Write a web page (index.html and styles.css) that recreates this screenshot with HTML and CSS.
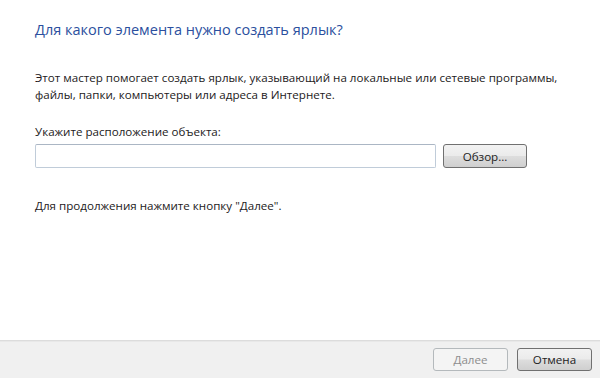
FILE: index.html
```html
<!DOCTYPE html>
<html lang="ru">
<head>
    <meta charset="UTF-8">
    <meta name="viewport" content="width=device-width, initial-scale=1.0">
    <title>Создать ярлык</title>
    <link rel="stylesheet" href="styles.css">
</head>
<body>
    <div class="wizard">
        <div class="wizard-body">
            <h1 class="main-instruction">Для какого элемента нужно создать ярлык?</h1>
            <p class="intro">Этот мастер помогает создать ярлык, указывающий на локальные или сетевые программы, файлы, папки, компьютеры или адреса в Интернете.</p>
            <label class="field-label" for="location">Укажите расположение объекта:</label>
            <div class="field-row">
                <input class="text-box" id="location" type="text">
                <button class="button">Обзор...</button>
            </div>
            <p class="hint">Для продолжения нажмите кнопку "Далее".</p>
        </div>
        <div class="wizard-footer">
            <button class="button" disabled>Далее</button>
            <button class="button">Отмена</button>
        </div>
    </div>
</body>
</html>
```

FILE: styles.css
```css
* {
    box-sizing: border-box;
}

body {
    margin: 0;
    background: #fff;
    font-family: 'Open Sans', 'Noto Sans', sans-serif;
    font-size: 11.6px;
    color: #231a22;
}

.wizard {
    height: 378px;
    display: flex;
    flex-direction: column;
}

.wizard-body {
    flex: 1;
    padding: 20px 0 0 35px;
}

.main-instruction {
    margin: 0;
    font-size: 14.5px;
    font-weight: normal;
    line-height: 20px;
    color: #2b4f9e;
}

.intro {
    margin: 29px 0 0;
    width: 545px;
    line-height: 17px;
}

.field-label {
    display: block;
    margin-top: 21px;
    line-height: 16px;
}

.field-row {
    display: flex;
    align-items: center;
    gap: 7px;
    margin-top: 4px;
}

.text-box {
    width: 401px;
    height: 24px;
    border: 1px solid #c0ccd9;
    border-top-color: #abb6c4;
    border-radius: 2px;
    background: #fff;
    outline: none;
}

.button {
    width: 84px;
    height: 24px;
    padding: 0;
    border: 1px solid #707070;
    border-radius: 3px;
    background: linear-gradient(#f2f2f2 0%, #ebebeb 48%, #dddddd 52%, #cfcfcf 100%);
    font-family: inherit;
    font-size: 11.6px;
    color: #222;
    cursor: pointer;
}

.button:disabled {
    border-color: #b4b9bc;
    background: #f4f4f4;
    color: #8d8d8d;
    cursor: default;
}

.hint {
    margin: 30px 0 0;
    line-height: 16px;
}

.wizard-footer {
    height: 38px;
    display: flex;
    justify-content: flex-end;
    align-items: center;
    gap: 9px;
    padding: 0 8px 1px 0;
    background: #f0f0f0;
    border-top: 1px solid #dcdcdc;
    box-shadow: inset 0 1px 0 #e8e8e8;
}

.wizard-footer .button {
    width: 75px;
    height: 23px;
}
```
